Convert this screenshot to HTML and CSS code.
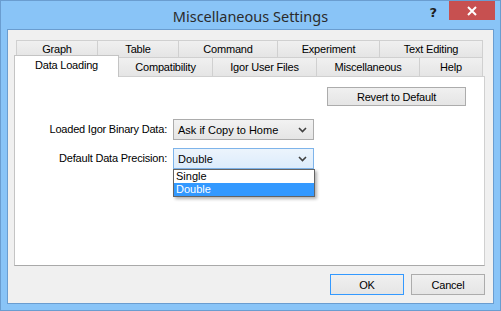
FILE: index.html
```html
<!DOCTYPE html>
<html lang="en">
<head>
<meta charset="UTF-8">
<title>Miscellaneous Settings</title>
<link rel="stylesheet" href="styles.css">
</head>
<body>
    <div class="window">
        <div class="titlebar">
            <span></span>
            <span class="title">Miscellaneous Settings</span>
            <div class="controls">
                <span class="help">?</span>
                <span class="close">
                    <svg width="10" height="10" viewBox="0 0 10 10"><path d="M1 1L9 9M9 1L1 9" stroke="#fff" stroke-width="2"/></svg>
                </span>
            </div>
        </div>

        <div class="client">
            <div class="tabrow back">
                <div class="tab w82">Graph</div>
                <div class="tab w82">Table</div>
                <div class="tab w100">Command</div>
                <div class="tab w103">Experiment</div>
                <div class="tab w104">Text Editing</div>
            </div>
            <div class="tabrow front">
                <div class="tab active w105">Data Loading</div>
                <div class="tab w95">Compatibility</div>
                <div class="tab w105">Igor User Files</div>
                <div class="tab w104">Miscellaneous</div>
                <div class="tab w64">Help</div>
            </div>

            <div class="panel">
                <div class="panel_top">
                    <button class="btn revert">Revert to Default</button>
                </div>
                <div class="fields">
                    <label class="field_label">Loaded Igor Binary Data:</label>
                    <div class="combo">
                        <span>Ask if Copy to Home</span>
                        <svg width="9" height="6" viewBox="0 0 9 6"><path d="M1 1L4.5 4.5L8 1" fill="none" stroke="#404040" stroke-width="1.6"/></svg>
                    </div>
                    <label class="field_label">Default Data Precision:</label>
                    <div class="combo_wrap">
                        <div class="combo focused">
                            <span>Double</span>
                            <svg width="9" height="6" viewBox="0 0 9 6"><path d="M1 1L4.5 4.5L8 1" fill="none" stroke="#404040" stroke-width="1.6"/></svg>
                        </div>
                        <ul class="droplist">
                            <li>Single</li>
                            <li class="selected">Double</li>
                        </ul>
                    </div>
                </div>
            </div>

            <div class="footer">
                <button class="btn default">OK</button>
                <button class="btn">Cancel</button>
            </div>
        </div>
    </div>
</body>
</html>
```

FILE: styles.css
```css
*,
*::before,
*::after {
  box-sizing: border-box;
}
body {
    margin: 0;
    font-family: "Liberation Sans", Arial, sans-serif;
    font-size: 11px;
    color: #000;
}
.window {
    width: 501px;
    height: 311px;
    background: #89c4f7;
    border: 1px solid #6a9dd0;
    display: flex;
    flex-direction: column;
}

/* title bar */
.titlebar {
    height: 28px;
    display: grid;
    grid-template-columns: 1fr auto 1fr;
    align-items: start;
}
.title {
    font-family: "Noto Sans", "Open Sans", sans-serif;
    font-size: 14.5px;
    color: #2b2b2b;
    line-height: 28px;
    padding-top: 1px;
}
.controls {
    display: flex;
    justify-content: flex-end;
    align-items: flex-start;
    margin-right: 5px;
}
.help {
    font-family: "DejaVu Sans", sans-serif;
    font-weight: bold;
    font-size: 13px;
    color: #1e1e1e;
    margin-right: 12px;
    margin-top: 4px;
}
.close {
    width: 46px;
    height: 19px;
    background: #c75050;
    display: flex;
    align-items: center;
    justify-content: center;
}

/* client */
.client {
    flex: 1;
    margin: 0 6px 6px 6px;
    border: 1px solid #6a9dd0;
    background: #f0f0f0;
    padding: 10px 8px 8px 6px;
    display: flex;
    flex-direction: column;
}

/* tabs */
.tabrow {
    display: flex;
}
.tabrow.back {
    height: 17px;
    margin-left: 2px;
}
.tabrow.front {
    height: 19px;
    align-items: flex-end;
}
.tab {
    height: 100%;
    flex: none;
    border: 1px solid #d0d0d0;
    border-bottom: none;
    margin-left: -1px;
    background: linear-gradient(#f0f0f0, #e5e5e5);
    text-align: center;
    line-height: 16px;
    letter-spacing: -0.2px;
}
.tab:first-child {
    margin-left: 0;
}
.front .tab {
    line-height: 18px;
}
.tab.active {
    position: relative;
    z-index: 1;
    height: 22px;
    margin-bottom: -1px;
    background: #fff;
    border-color: #c4c4c4;
    line-height: 19px;
}
.w64 { width: 64px; }
.w82 { width: 82px; }
.w95 { width: 95px; }
.w100 { width: 100px; }
.w103 { width: 103px; }
.w104 { width: 104px; }
.w105 { width: 105px; }

/* panel */
.panel {
    height: 190px;
    border: 1px solid #d0d0d0;
    border-bottom-color: #a9a9a9;
    border-left-color: #c4c4c4;
    background: #fff;
    padding-top: 10px;
}
.panel_top {
    display: flex;
    justify-content: flex-end;
    padding-right: 18px;
}
.btn {
    font-family: inherit;
    font-size: 11px;
    color: #000;
    height: 21px;
    width: 74px;
    padding: 0;
    border: 1px solid #acacac;
    background: linear-gradient(#f0f0f0, #e5e5e5);
    letter-spacing: -0.2px;
}
.btn.revert {
    width: 139px;
    height: 19px;
}
.btn.default {
    border-color: #3399ff;
}

.fields {
    display: grid;
    grid-template-columns: 152px 141px;
    column-gap: 6px;
    row-gap: 8px;
    margin-top: 13px;
}
.field_label {
    text-align: right;
    line-height: 21px;
    letter-spacing: -0.2px;
}
.combo {
    height: 21px;
    border: 1px solid #acacac;
    background: linear-gradient(#f2f2f2, #e5e5e5);
    display: flex;
    align-items: center;
    justify-content: space-between;
    padding: 0 6px 0 4px;
}
.combo.focused {
    border-color: #7eb4ea;
    background: linear-gradient(#ecf4fc, #dcecfc);
}
.combo_wrap {
    position: relative;
}
.droplist {
    position: absolute;
    top: 100%;
    left: 0;
    width: 142px;
    margin: 0;
    padding: 0;
    list-style: none;
    background: #fff;
    border: 1px solid #646464;
    box-shadow: 2px 2px 3px rgba(0, 0, 0, 0.3);
}
.droplist li {
    height: 13px;
    line-height: 13px;
    padding-left: 2px;
}
.droplist li.selected {
    background: #3399ff;
    color: #fff;
}

/* footer */
.footer {
    display: flex;
    justify-content: flex-end;
    gap: 7px;
    margin-top: 8px;
}
```
